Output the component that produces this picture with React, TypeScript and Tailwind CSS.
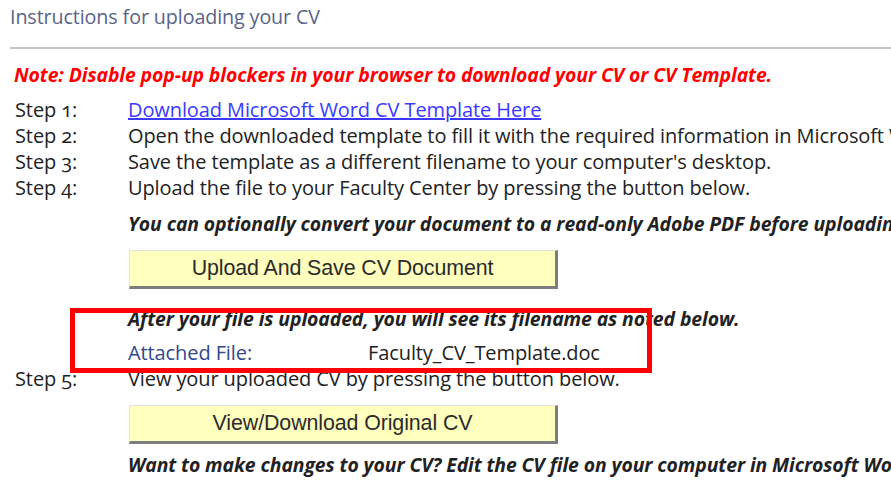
import React from "react";

const body = "font-['Open_Sans',_'Noto_Sans',_sans-serif] oldstyle-nums";

function StepRow({ label, children }: { label?: string; children: React.ReactNode }) {
  return (
    <div className="flex h-[26px] items-center whitespace-nowrap">
      <div className="w-[128px] shrink-0 pl-[15px] text-[#222]">{label}</div>
      <div className="text-[#222]">{children}</div>
    </div>
  );
}

function YellowButton({ label }: { label: string }) {
  return (
    <div className="flex">
      <div className="w-[129px] shrink-0" />
      <button
        type="button"
        className="flex h-[39px] w-[429px] items-center justify-center border-l border-t border-b-[3px] border-r-[3px] border-l-[#e2e2e2] border-t-[#e2e2e2] border-b-[#7d7d7d] border-r-[#7d7d7d] bg-[#ffffbe] font-['Liberation_Sans',_Arial,_sans-serif] text-[21.4px] text-[#2b2b2b]"
      >
        {label}
      </button>
    </div>
  );
}

const emphasis = "font-bold italic text-[19.4px]";

export default function App() {
  return (
    <div className={`relative h-[482px] w-[891px] overflow-hidden bg-white text-[20px] tracking-[-0.1px] ${body}`}>
      {/* heading and rule */}
      <div className="flex h-[34px] items-center whitespace-nowrap pl-[10px] text-[19.7px] text-[#5a6488]">
        Instructions for uploading your CV
      </div>
      <div className="ml-[10px] mt-[13px] h-[2px] bg-[#c4c4c4]" />

      {/* pop-up warning */}
      <div className={`mt-[14px] flex h-[24px] items-center whitespace-nowrap pl-[14px] text-[#ff0000] ${emphasis}`}>
        Note: Disable pop-up blockers in your browser to download your CV or CV Template.
      </div>

      {/* numbered steps */}
      <div className="mt-[10px]">
        <StepRow label="Step 1:">
          <a href="#" className="text-[#3a3aff] underline">
            Download Microsoft Word CV Template Here
          </a>
        </StepRow>
        <StepRow label="Step 2:">
          Open the downloaded template to fill it with the required information in Microsoft Word.
        </StepRow>
        <StepRow label="Step 3:">Save the template as a different filename to your computer's desktop.</StepRow>
        <StepRow label="Step 4:">Upload the file to your Faculty Center by pressing the button below.</StepRow>
      </div>

      <div className="mt-[10px]">
        <StepRow>
          <span className={emphasis}>
            You can optionally convert your document to a read-only Adobe PDF before uploading it.
          </span>
        </StepRow>
      </div>

      <div className="mt-[13px]">
        <YellowButton label="Upload And Save CV Document" />
      </div>

      <div className="mt-[17px]">
        <StepRow>
          <span className={emphasis}>After your file is uploaded, you will see its filename as noted below.</span>
        </StepRow>
      </div>
      <div className="mt-[8px]">
        <StepRow>
          <div className="flex">
            <span className="w-[240px] text-[#2f4a8a]">Attached File:</span>
            <span>Faculty_CV_Template.doc</span>
          </div>
        </StepRow>
      </div>
      <StepRow label="Step 5:">View your uploaded CV by pressing the button below.</StepRow>

      <div className="mt-[13px]">
        <YellowButton label="View/Download Original CV" />
      </div>

      <div className="mt-[8px]">
        <StepRow>
          <span className={emphasis}>
            Want to make changes to your CV? Edit the CV file on your computer in Microsoft Word and upload it again.
          </span>
        </StepRow>
      </div>

      {/* highlight frame drawn over the attached-file area */}
      <div className="pointer-events-none absolute left-[70px] top-[308px] h-[65px] w-[582px] border-[5px] border-[#ff0000]" />
    </div>
  );
}
